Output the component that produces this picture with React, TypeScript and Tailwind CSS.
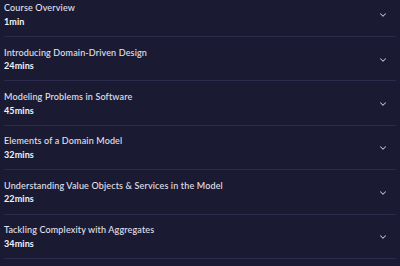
import React from "react";
import { ChevronDown } from "lucide-react";

const lessons = [
  { title: "Course Overview", length: "1min" },
  { title: "Introducing Domain-Driven Design", length: "24mins" },
  { title: "Modeling Problems in Software", length: "45mins" },
  { title: "Elements of a Domain Model", length: "32mins" },
  { title: "Understanding Value Objects & Services in the Model", length: "22mins" },
  { title: "Tackling Complexity with Aggregates", length: "34mins" },
];

export default function App() {
  return (
    <div className="w-[400px] h-[266px] overflow-hidden bg-[#1b1a33] px-1" style={{ fontFamily: "Lato, 'Noto Sans', sans-serif" }}>
      <ul className="-mt-[7.4px]">
        {lessons.map((lesson) => (
          <li
            key={lesson.title}
            className="h-[44.4px] border-b border-[#2d2b4c] flex items-center justify-between pr-[8px]"
          >
            <div className="flex flex-col leading-[13.5px] pt-[1px]">
              <span className="text-[9px] font-medium tracking-[0.15px] text-[#e2e1ec]">{lesson.title}</span>
              <span className="text-[9px] font-bold tracking-[0.1px] text-[#f2f2f7]">{lesson.length}</span>
            </div>
            <ChevronDown className="w-[10px] h-[10px] text-[#c2c0da] mt-[2px]" strokeWidth={2.5} />
          </li>
        ))}
      </ul>
    </div>
  );
}
